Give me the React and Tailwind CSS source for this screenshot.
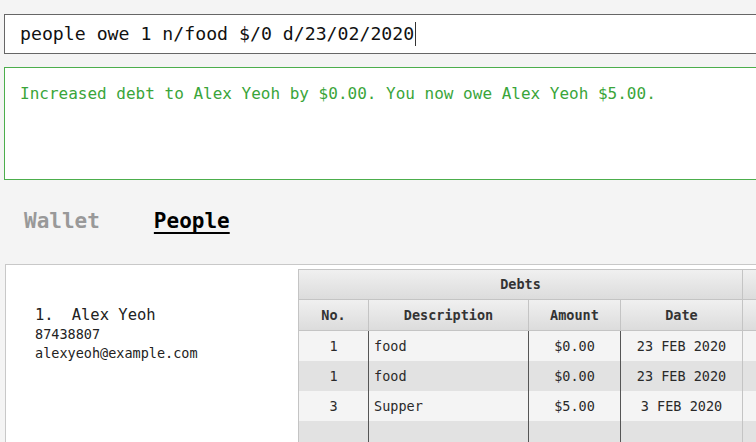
import React from 'react';

const mono = { fontFamily: '"DejaVu Sans Mono", "Liberation Mono", monospace' };

const debts = [
  { no: 1, desc: 'food', amount: '$0.00', date: '23 FEB 2020' },
  { no: 1, desc: 'food', amount: '$0.00', date: '23 FEB 2020' },
  { no: 3, desc: 'Supper', amount: '$5.00', date: '3 FEB 2020' },
  { no: '', desc: '', amount: '', date: '' },
];

const DebtTable = () => {
  return (
    <div className="mt-[4px] flex-1 overflow-hidden border-l border-t border-[#c4c4c4] bg-[#f4f4f4]">
      <div className="flex">
        <div className="w-[444px] shrink-0">
          {/* Group header */}
          <div className="flex h-[30px] items-center justify-center border-b border-r border-[#c4c4c4] bg-gradient-to-b from-[#f0f0f0] to-[#dcdcdc] text-[13.5px] font-bold text-[#333]">
            Debts
          </div>
          {/* Column headers */}
          <div className="flex h-[31px] border-b border-[#c4c4c4] bg-gradient-to-b from-[#f0f0f0] to-[#dcdcdc] text-[13.5px] font-bold text-[#333]">
            <div className="flex w-[70px] items-center justify-center border-r border-[#c4c4c4]">No.</div>
            <div className="flex w-[160px] items-center justify-center border-r border-[#c4c4c4]">Description</div>
            <div className="flex w-[92px] items-center justify-center border-r border-[#c4c4c4]">Amount</div>
            <div className="flex w-[122px] items-center justify-center border-r border-[#c4c4c4]">Date</div>
          </div>
          {debts.map((d, i) => (
            <div
              key={i}
              className={`flex h-[30px] text-[13.5px] text-[#2a2a2a] ${i % 2 === 0 ? 'bg-[#f4f4f4]' : 'bg-[#e2e2e2]'}`}
            >
              <div className="flex w-[70px] items-center justify-center border-r border-[#555]">{d.no}</div>
              <div className="flex w-[160px] items-center border-r border-[#555] pl-[5px]">{d.desc}</div>
              <div className="flex w-[92px] items-center justify-center border-r border-[#555]">{d.amount}</div>
              <div className="flex w-[122px] items-center justify-center border-r border-[#c4c4c4]">{d.date}</div>
            </div>
          ))}
        </div>
        <div className="flex-1">
          <div className="h-[30px] border-b border-[#c4c4c4] bg-gradient-to-b from-[#f0f0f0] to-[#dcdcdc]"></div>
          <div className="h-[31px] border-b border-[#c4c4c4] bg-gradient-to-b from-[#f0f0f0] to-[#dcdcdc]"></div>
          {debts.map((d, i) => (
            <div key={i} className={`h-[30px] ${i % 2 === 0 ? 'bg-[#f4f4f4]' : 'bg-[#e2e2e2]'}`}></div>
          ))}
        </div>
      </div>
    </div>
  );
};

const App = () => {
  return (
    <div className="h-[442px] w-[756px] overflow-hidden bg-[#f4f4f4]" style={mono}>
      {/* Command box */}
      <div className="ml-[4px] mt-[14px] -mr-[10px] flex h-[40px] items-center border border-[#666] bg-white pl-[15px]">
        <span className="text-[18.2px] text-[#111]">people owe 1 n/food $/0 d/23/02/2020</span>
        <span className="ml-[1px] inline-block h-[24px] w-px bg-[#333]"></span>
      </div>

      {/* Result box */}
      <div className="ml-[4px] mt-[13px] -mr-[10px] h-[113px] border border-[#4cae4c] bg-white pl-[15px] pt-[14px]">
        <p className="text-[16px] text-[#3aa53a]">
          Increased debt to Alex Yeoh by $0.00. You now owe Alex Yeoh $5.00.
        </p>
      </div>

      {/* Tabs */}
      <div className="mt-[27px] flex h-[30px] items-center pl-[24px] text-[21px] font-bold">
        <span className="text-[#999]">Wallet</span>
        <span className="ml-[54px] text-black underline decoration-2 underline-offset-[4px]">People</span>
      </div>

      {/* Main panel */}
      <div className="ml-[5px] mt-[27px] -mr-[10px] flex h-[200px] border border-[#c8c8c8] bg-white">
        <div className="w-[292px] shrink-0 pl-[29px] pt-[40px]">
          <div className="flex text-[15.5px] leading-[20px] text-[#222]">
            <span>1.</span>
            <span className="ml-[18px]">Alex Yeoh</span>
          </div>
          <div className="text-[13.5px] leading-[19px] text-[#222]">87438807</div>
          <div className="text-[13.5px] leading-[19px] text-[#222]">alexyeoh@example.com</div>
        </div>
        <DebtTable />
      </div>
    </div>
  );
};

export default App;
